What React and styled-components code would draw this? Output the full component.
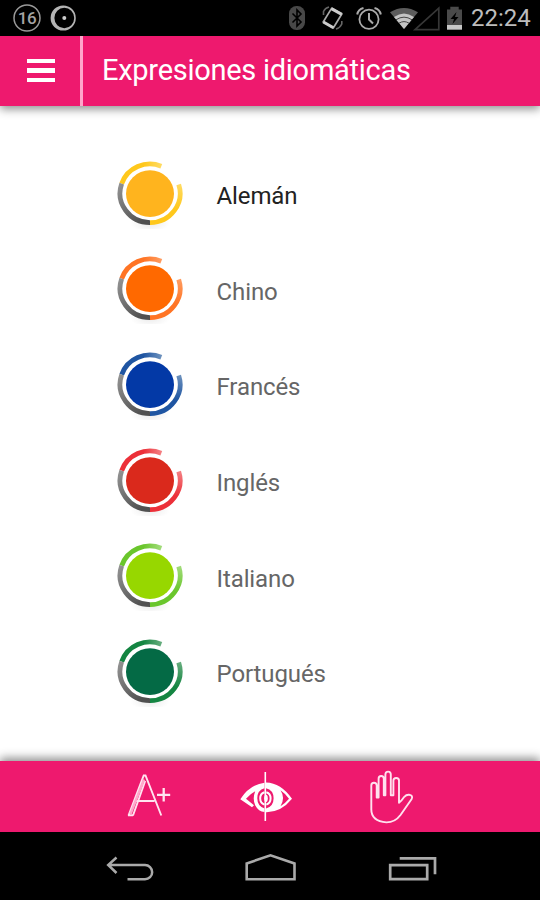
import React from 'react';
import styled, { createGlobalStyle } from 'styled-components';

const languages = [
  { name: 'Alemán', color: '#ffb41e', ring: '#ffc81c', tip: '#ffdb62', active: true },
  { name: 'Chino', color: '#ff6900', ring: '#ff7424', tip: '#ff9c60' },
  { name: 'Francés', color: '#0339a6', ring: '#1f55a2', tip: '#6c91bd' },
  { name: 'Inglés', color: '#da291c', ring: '#ec3039', tip: '#f48083' },
  { name: 'Italiano', color: '#97d700', ring: '#6ac62c', tip: '#a2dc7b' },
  { name: 'Portugués', color: '#046a45', ring: '#148542', tip: '#66ad7e' },
];

const Ring = ({ id, color, ring, tip }) => (
  <RingSvg viewBox="0 0 70 70">
    <defs>
      <linearGradient id={`top-${id}`} x1="0" x2="1">
        <stop offset="0.55" stopColor={ring} />
        <stop offset="1" stopColor={tip} />
      </linearGradient>
      <linearGradient id={`side-${id}`} x1="0" y1="0" x2="0" y2="1">
        <stop offset="0" stopColor={tip} />
        <stop offset="0.65" stopColor={ring} />
      </linearGradient>
      <linearGradient id={`grey-${id}`} x1="0" y1="0" x2="0.7" y2="1">
        <stop offset="0" stopColor="#929292" />
        <stop offset="1" stopColor="#505050" />
      </linearGradient>
      <radialGradient id={`shade-${id}`}>
        <stop offset="0" stopColor="#000" stopOpacity="0.08" />
        <stop offset="1" stopColor="#000" stopOpacity="0" />
      </radialGradient>
    </defs>
    <ellipse cx="35" cy="64" rx="20" ry="9" fill={`url(#shade-${id})`} />
    <circle cx="35" cy="34.3" r="30" fill="#fff" />
    <g fill="none" strokeWidth="4.8">
      <path d="M6.7 24.6A29.9 29.3 0 0 1 46.3 7.2" stroke={`url(#top-${id})`} />
      <path d="M63.7 25.4A29.9 29.3 0 0 1 35 63.6" stroke={`url(#side-${id})`} />
      <path d="M35 63.6A29.9 29.3 0 0 1 6.7 24.6" stroke={`url(#grey-${id})`} />
    </g>
    <ellipse cx="35" cy="34.7" rx="24" ry="23.4" fill={color} />
  </RingSvg>
);

const App = () => (
  <Screen>
    <GlobalStyle />
    <StatusBar>
      <Icon $w={28} $h={36} viewBox="13 0 28 36">
        <circle cx="27" cy="18" r="13" stroke="#999" strokeWidth="1.5" />
        <StatusText x="27" y="24" textAnchor="middle">16</StatusText>
      </Icon>
      <Icon $w={28} $h={36} $left={8} viewBox="49 0 28 36">
        <path d="M50.6 18a12.6 12.6 0 1 0 25.2 0a12.6 12.6 0 1 0 -25.2 0ZM54.4 18a9.9 10.2 0 1 1 19.8 0a9.9 10.2 0 1 1 -19.8 0Z" fill="#b4b4b4" fillRule="evenodd" />
        <circle cx="64.3" cy="18" r="2" fill="#ccc" />
      </Icon>
      <Spacer />
      <Icon $w={18} $h={36} viewBox="288 0 18 36">
        <rect x="289" y="6" width="16" height="24" rx="7.5" fill="#484848" />
        <path d="M292.5 13.5 301 22 297 26V10L301 14 292.5 22.5" stroke="#000" strokeWidth="1.6" />
      </Icon>
      <Icon $w={24} $h={36} $left={15} viewBox="321 0 24 36">
        <path d="M331.6 8.3 341.8 14 333.4 27.8 323.2 22Z" stroke="#aaa" strokeWidth="1.7" />
        <path d="M331.4 8.6 341.8 14.4M323.4 22 333.4 27.8" stroke="#ccc" strokeWidth="3" />
        <path d="M323.5 15V11.5Q325 8 329 7M341.8 21V24Q340 28 336 29" stroke="#666" strokeWidth="1.6" />
      </Icon>
      <Icon $w={26} $h={36} $left={11} viewBox="356 0 26 36">
        <circle cx="369" cy="19.3" r="9.6" stroke="#aaa" strokeWidth="1.8" />
        <path d="M369 13V19.5L373 23.5M357.2 14.5Q358 9.5 363.5 8M380.8 14.5Q380 9.5 374.5 8" stroke="#aaa" strokeWidth="2" />
      </Icon>
      <Icon $w={52} $h={36} $left={7} viewBox="389 0 52 36">
        <path d="M390 12.3Q404 3.5 418 12.3L404 29Z" fill="#5c5c5c" />
        <path d="M394 17Q404 10 414 17L404 29Z" fill="#c4c4c4" />
        <path d="M396 19.8Q404 14.5 412 19.8M399 23.2Q404 20 409 23.2" stroke="#444" strokeWidth="1" />
        <path d="M415 29.7H438.8V8.2Z" stroke="#373737" strokeWidth="1.7" />
      </Icon>
      <Icon $w={17} $h={36} $left={5} viewBox="446 0 17 36">
        <path d="M447 9.5H450.3V6.8H458.7V9.5H462V25.5H447Z" fill="#4a4a4a" />
        <path d="M447 25H462V29.7H447Z" fill="#c8c8c8" />
        <path d="M456.5 12 450.5 19H454L452.5 24L458.5 17H455Z" fill="#000" />
      </Icon>
      <Clock>22:24</Clock>
    </StatusBar>

    <Header>
      <MenuButton aria-label="Menú">
        <Bar /><Bar /><Bar />
      </MenuButton>
      <Title>Expresiones idiomáticas</Title>
    </Header>

    <List>
      {languages.map((lang, i) => (
        <Row key={lang.name}>
          <Ring id={i} {...lang} />
          <Label $active={lang.active}>{lang.name}</Label>
        </Row>
      ))}
    </List>

    <Toolbar>
      <Icon $w={50} $h={71} viewBox="124 761 50 71">
        <path d="M128.5 815.5 143.7 775.5H145.5L161.3 815.5M133 815.5 145.2 781M128 815.3H133M135 801H154.5" stroke="#ffe4f0" strokeWidth="1.9" />
        <path d="M130.5 814 144 779.5" stroke="#ffa9cc" strokeWidth="2.4" />
        <path d="M163.7 788V801.5M157 794.8H170.2" stroke="#ffe4f0" strokeWidth="2.3" />
      </Icon>
      <Icon $w={56} $h={71} $left={64} viewBox="238 761 56 71">
        {/* left half: open lid and iris arcs */}
        <path d="M264.5 782.8Q250 784.5 240.3 799.2L252 807.3L254 805.2L246 798.8Q250 794 255.2 791.3Q252.2 799 255.3 805.5Q258.5 811.5 264.5 812V808.6Q257.3 806 257.3 798.3Q257.3 790 264.5 788.2Z" fill="#fff" />
        {/* right half: filled eye */}
        <path d="M266 782.5Q281 783 292 798.8Q281 812.5 266 812.2V808.6Q273.6 806.5 273.6 798.3Q273.6 790 266 788.2Z" fill="#fff" />
        <path d="M280.5 790.3Q285.8 794 289 798.8Q285 803.6 280.5 806.2Q285.6 798 280.5 790.3Z" fill="#ee196e" />
        <path d="M264.5 792.2Q260.2 793.5 260.2 798.3Q260.2 803.2 264.5 804.6M266.3 792.2Q270.6 793.5 270.6 798.3Q270.6 803.2 266.3 804.6" stroke="#fff" strokeWidth="2" />
        <ellipse cx="266" cy="798.3" rx="1.8" ry="3.6" fill="#fff" />
        <path d="M265.3 772V821" stroke="#fff" strokeWidth="1.6" />
      </Icon>
      <Icon $w={48} $h={71} $left={73} viewBox="367 761 48 71">
        <path
          d="M371.3 810V785.5Q371.3 782.8 374 782.8Q376.7 782.8 376.7 785.5V797.5H378.6V778.8Q378.6 776 381.2 776Q383.8 776 383.8 778.8V795.3H385.4V774.5Q385.4 771.6 388.1 771.6Q390.8 771.6 390.8 774.5V795.3H393.4V780.6Q393.4 778 396.2 778Q399 778 399 780.6V802.8Q401.5 801 404.3 796.8Q406.3 794.6 409 794.8Q413.6 795.4 411.5 799.2L400.5 815Q395 822.4 386.5 822.4Q371.3 821 371.3 809.5"
          stroke="#ffe1ee"
          strokeWidth="1.9"
          strokeLinejoin="round"
        />
      </Icon>
    </Toolbar>

    <NavBar>
      <Icon $w={50} $h={40} viewBox="105 848 50 40">
        <path d="M116.5 857.5 108.2 865 116.5 873M108.5 865H145A7 7 0 0 1 145 879.3H127.5" stroke="#aaa" strokeWidth="2.5" />
      </Icon>
      <Icon $w={54} $h={40} $left={88} viewBox="243 848 54 40">
        <path d="M246.7 863.5 270.5 855.3 294.5 863.5V879.3H246.7Z" stroke="#aaa" strokeWidth="2.6" />
      </Icon>
      <Icon $w={52} $h={40} $left={90} viewBox="387 848 52 40">
        <path d="M390.2 865.2H427.2V879.2H390.2Z" stroke="#aaa" strokeWidth="2.7" />
        <path d="M399.7 858.3H435V874.2" stroke="#aaa" strokeWidth="2.7" />
      </Icon>
    </NavBar>
  </Screen>
);

const GlobalStyle = createGlobalStyle`
  * { box-sizing: border-box; }
  body {
    margin: 0;
    background: #fff;
  }
`;

const Screen = styled.div`
  width: 540px;
  height: 900px;
  display: flex;
  flex-direction: column;
  overflow: hidden;
  background: #fff;
  font-family: Roboto, 'Liberation Sans', sans-serif;
`;

const Icon = styled.svg`
  flex: none;
  display: block;
  width: ${p => p.$w}px;
  height: ${p => p.$h}px;
  margin-left: ${p => p.$left || 0}px;
  fill: none;
`;

const StatusBar = styled.div`
  flex: none;
  display: flex;
  height: 36px;
  padding: 0 9px 0 13px;
  background: #000;
`;

const StatusText = styled.text`
  font-size: 17px;
  font-weight: 500;
  letter-spacing: -0.5px;
  fill: #a4a4a4;
`;

const Spacer = styled.div`
  flex: 1;
`;

const Clock = styled.span`
  width: 60px;
  margin-left: 8px;
  color: #bdbdbd;
  font-size: 24px;
  line-height: 37px;
  white-space: nowrap;
`;

const Header = styled.header`
  flex: none;
  display: flex;
  height: 70px;
  background: #ee196e;
  box-shadow: 0 3px 9px rgba(0, 0, 0, 0.45);
`;

const MenuButton = styled.button`
  width: 83px;
  display: flex;
  flex-direction: column;
  gap: 5px;
  padding: 23px 0 0 27px;
  border: 0;
  border-right: 3px solid #ffa5cb;
  background: none;
`;

const Bar = styled.span`
  width: 28px;
  height: 4.4px;
  background: #fff;
`;

const Title = styled.h1`
  margin: 0 0 0 19px;
  color: #fff;
  font-size: 29px;
  font-weight: 400;
  letter-spacing: -0.27px;
  line-height: 68px;
  white-space: nowrap;
`;

const List = styled.ul`
  flex: 1;
  margin: 0;
  padding: 40px 0 0 115px;
  list-style: none;
`;

const Row = styled.li`
  display: flex;
  align-items: center;
  height: 95.6px;
`;

const RingSvg = styled.svg`
  flex: none;
  width: 70px;
  height: 70px;
`;

const Label = styled.span`
  margin: 5px 0 0 31.5px;
  color: ${p => (p.$active ? '#222' : '#666')};
  font-size: 24px;
  letter-spacing: -0.1px;
  line-height: 28px;
`;

const Toolbar = styled.footer`
  flex: none;
  display: flex;
  height: 71px;
  padding-left: 124px;
  background: #ee196e;
  box-shadow: 0 -3px 9px rgba(0, 0, 0, 0.45);
`;

const NavBar = styled.nav`
  flex: none;
  display: flex;
  height: 68px;
  padding: 16px 0 0 105px;
  background: #000;
`;

export default App;
